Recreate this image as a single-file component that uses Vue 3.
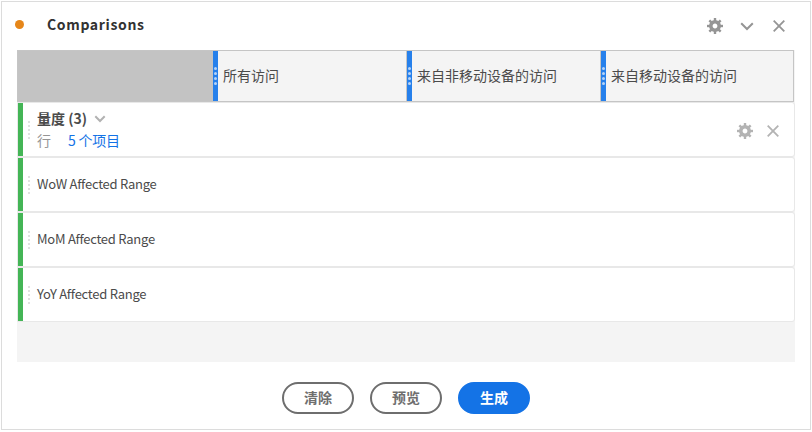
<script setup>
const gear = Array.from({ length: 8 }, (_, i) => i * 45)
const columns = ['所有访问', '来自非移动设备的访问', '来自移动设备的访问']
const rows = ['WoW Affected Range', 'MoM Affected Range', 'YoY Affected Range']
</script>

<template>
  <section class="panel">
    <header class="titlebar">
      <span class="status"></span>
      <h1>Comparisons</h1>
      <div class="tools">
        <svg class="gear" width="16" height="16" viewBox="-8 -8 16 16">
          <rect v-for="a in gear" :key="a" x="-1.2" y="-8" width="2.4" height="4" :transform="`rotate(${a})`" />
          <circle r="4.2" fill="none" stroke="currentColor" stroke-width="3.6" />
        </svg>
        <svg class="chevron" width="14" height="9" viewBox="0 0 14 9"><path d="M1.2 1.2 7 7 12.8 1.2" /></svg>
        <svg class="close" width="12" height="12" viewBox="0 0 12 12"><path d="M.7.7l10.6 10.6M11.3.7.7 11.3" /></svg>
      </div>
    </header>

    <div class="table">
      <div class="columns">
        <div class="corner"></div>
        <div v-for="c in columns" :key="c" class="column">
          <span class="handle"><i v-for="n in 4" :key="n"></i></span>
          <span class="name">{{ c }}</span>
        </div>
      </div>
      <div class="row metrics">
        <span class="grip"><i v-for="n in 5" :key="n"></i></span>
        <div class="info">
          <div class="heading">
            <span>量度 (3)</span>
            <svg width="12" height="8" viewBox="0 0 12 8"><path d="M1.3 1.3 6 6 10.7 1.3" /></svg>
          </div>
          <div class="sub"><span>行</span><a>5 个项目</a></div>
        </div>
        <div class="row-tools">
          <svg class="gear" width="16" height="16" viewBox="-8 -8 16 16">
            <rect v-for="a in gear" :key="a" x="-1.2" y="-8" width="2.4" height="4" :transform="`rotate(${a})`" />
            <circle r="4.2" fill="none" stroke="currentColor" stroke-width="3.6" />
          </svg>
          <svg class="close" width="12" height="12" viewBox="0 0 12 12"><path d="M.7.7l10.6 10.6M11.3.7.7 11.3" /></svg>
        </div>
      </div>
      <div v-for="r in rows" :key="r" class="row">
        <span class="grip"><i v-for="n in 5" :key="n"></i></span>
        <span class="label">{{ r }}</span>
      </div>
    </div>

    <footer class="actions">
      <button>清除</button>
      <button>预览</button>
      <button class="primary">生成</button>
    </footer>
  </section>
</template>

<style>
body { background: #fff; }
</style>

<style scoped>
* { box-sizing: border-box; }
.panel {
  width: 810px;
  height: 429px;
  margin: 1px;
  border: 1px solid #dcdcdc;
  padding: 0 15px;
  font-family: "Noto Sans CJK SC", sans-serif;
  font-size: 14px;
  color: #4b4b4b;
}
.titlebar { display: flex; align-items: center; height: 48px; }
.status { width: 9px; height: 9px; margin: -3px 0 0 -2px; border-radius: 50%; background: #e68619; }
h1 { margin: -4px 0 0 23px; font-size: 14px; line-height: 20px; font-weight: 700; letter-spacing: .65px; color: #323232; }
.tools { display: flex; align-items: center; margin: 0 10px 0 auto; color: #959595; }
.tools .chevron { margin: 1px 19px 0 17px; }
svg { display: block; flex: none; }
.gear { fill: currentColor; }
.chevron path, .heading path { fill: none; stroke: #959595; stroke-width: 2; }
.close path { fill: none; stroke: currentColor; stroke-width: 1.8; }
.table { width: 778px; height: 312px; background: #f4f4f4; }
.columns {
  display: grid;
  grid-template-columns: 195px 193px 194px 193px;
  width: 777px;
  height: 52px;
  border: 1px solid #c5c5c5;
  background: #f4f4f4;
}
.corner { background: #c3c3c3; }
.column { display: flex; align-items: center; }
.column + .column { border-left: 1px solid #c5c5c5; }
.handle {
  display: flex;
  flex-direction: column;
  align-items: center;
  justify-content: center;
  gap: 2px;
  width: 5px;
  height: 50px;
  background: #2680eb;
}
.handle i { width: 3px; height: 3px; border-radius: 50%; background: #b5d3f8; }
.name { margin-left: 5px; padding-bottom: 2px; line-height: 20px; white-space: nowrap; font-weight: 400; }
.row {
  display: flex;
  align-items: center;
  height: 55px;
  border: 1px solid #e8e8e8;
  border-radius: 0 3px 3px 0;
  background: linear-gradient(90deg, #44b556 5px, #fff 5px);
}
.grip { display: flex; flex-direction: column; gap: 2px; margin-left: 10px; }
.grip i { width: 2px; height: 2px; background: #e1e1e1; }
.label { margin-left: 7px; padding-bottom: 2px; line-height: 20px; font-size: 13px; letter-spacing: -.25px; }
.info { margin-left: 7px; padding-bottom: 2px; }
.heading { display: flex; align-items: center; gap: 7px; height: 22px; font-weight: 700; }
.heading svg { margin-top: 2px; }
.heading path { stroke: #b2b2b2; }
.sub { display: flex; gap: 17px; height: 22px; line-height: 22px; color: #959595; }
.sub a { color: #1473e6; letter-spacing: -.2px; }
.row-tools { display: flex; align-items: center; gap: 14px; margin: 3px 15px 0 auto; color: #b3b3b3; }
.actions { display: flex; justify-content: center; gap: 16px; margin-top: 20px; }
button {
  width: 72px;
  height: 32px;
  padding: 0 0 2px;
  border: 2px solid #6e6e6e;
  border-radius: 16px;
  background: #fff;
  font: 700 14px/26px "Noto Sans CJK SC", sans-serif;
  color: #6e6e6e;
}
.primary { border-color: #1473e6; background: #1473e6; color: #fff; }
</style>
